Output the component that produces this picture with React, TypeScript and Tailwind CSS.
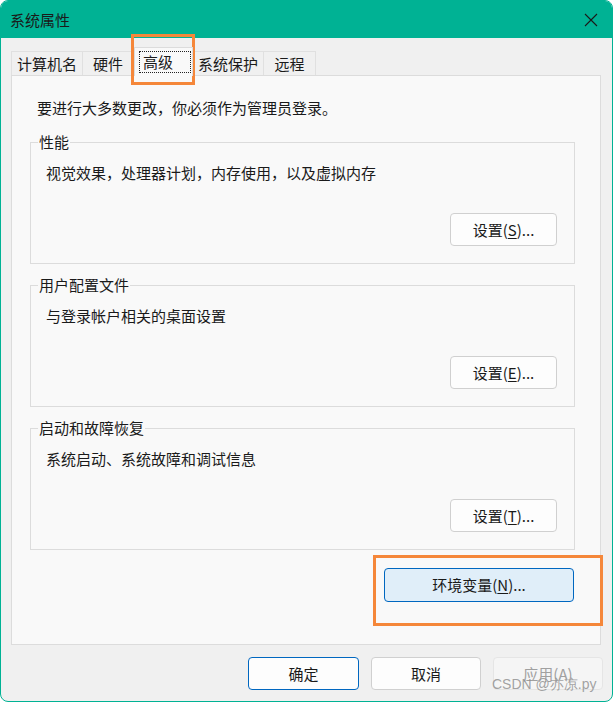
import React from "react";

function Btn({
  children,
  className = "",
}: {
  children: React.ReactNode;
  className?: string;
}) {
  return (
    <div
      className={
        "flex items-center justify-center rounded-[4px] border text-[15px] leading-[20px] " +
        className
      }
    >
      {children}
    </div>
  );
}

function Group({
  label,
  desc,
  btn,
  keyChar,
}: {
  label: string;
  desc: string;
  btn: string;
  keyChar: string;
}) {
  return (
    <div className="relative ml-[18px] flex h-[122px] w-[545px] flex-col border border-[#dcdcdc]">
      <div className="absolute -top-[11px] left-[7px] bg-[#f9f9f9] px-[1px] text-[15px] leading-[20px] text-[#1a1a1a]">
        {label}
      </div>
      <div className="pl-[15px] pt-[20px] text-[15px] leading-[20px] text-[#1a1a1a]">
        {desc}
      </div>
      <Btn className="mr-[17px] mt-[30px] h-[33px] w-[107px] self-end border-[#d0d0d0] bg-[#fdfdfd] text-[#1a1a1a]">
        <span>
          {btn}(<span className="underline underline-offset-2">{keyChar}</span>)...
        </span>
      </Btn>
    </div>
  );
}

export default function App() {
  const tabBase =
    "flex h-[24px] items-center justify-center border border-b-0 border-[#e0e0e0] bg-[#f0f0f0] text-[15px] leading-[20px] text-[#1a1a1a]";
  return (
    <div className="relative h-[702px] w-[613px] overflow-hidden rounded-[8px] border border-[#00b294] bg-[#f0f0f0] font-['Microsoft_YaHei_UI','Noto_Sans_CJK_SC',sans-serif]">
      {/* Title bar */}
      <div className="flex h-[37px] items-center justify-between bg-[#00b294] pl-[9px] pr-[14px]">
        <span className="text-[15px] leading-[20px] text-[#1a1a1a]">系统属性</span>
        <svg width="14" height="14" viewBox="0 0 14 14" className="text-[#1a1a1a]">
          <path d="M1 1 L13 13 M13 1 L1 13" stroke="currentColor" strokeWidth="1.1" />
        </svg>
      </div>

      {/* Tabs */}
      <div className="ml-[10px] mt-[9px] flex h-[28px] items-end">
        <div className={tabBase + " w-[72px]"}>计算机名</div>
        <div className={tabBase + " w-[51px] border-l-0"}>硬件</div>
        <div className="relative z-10 -mb-[1px] flex h-[29px] w-[59px] items-start justify-center border border-b-0 border-[#dcdcdc] bg-[#f9f9f9] pt-[3px]">
          <div className="ml-[4px] mr-[1px] flex h-[22px] w-full items-center justify-start border border-dotted border-[#222] pl-[3px] text-[15px] leading-[20px] text-[#1a1a1a]">
            高级
          </div>
        </div>
        <div className={tabBase + " w-[71px] border-l-0"}>系统保护</div>
        <div className={tabBase + " w-[52px] border-l-0"}>远程</div>
      </div>

      {/* Panel */}
      <div className="ml-[10px] flex h-[570px] w-[590px] flex-col border border-[#dcdcdc] bg-[#f9f9f9]">
        <div className="pl-[25px] pt-[22px] text-[15px] leading-[20px] text-[#1a1a1a]">
          要进行大多数更改，你必须作为管理员登录。
        </div>
        <div className="mt-[24px] flex flex-col gap-[21px]">
          <Group label="性能" desc="视觉效果，处理器计划，内存使用，以及虚拟内存" btn="设置" keyChar="S" />
          <Group label="用户配置文件" desc="与登录帐户相关的桌面设置" btn="设置" keyChar="E" />
          <Group label="启动和故障恢复" desc="系统启动、系统故障和调试信息" btn="设置" keyChar="T" />
        </div>
        <Btn className="mr-[26px] mt-[18px] h-[34px] w-[190px] self-end border-[#0067c0] bg-[#e0eef9] text-[#1a1a1a]">
          <span>
            环境变量(<span className="underline underline-offset-2">N</span>)...
          </span>
        </Btn>
      </div>

      {/* Bottom buttons */}
      <div className="mr-[9px] mt-[12px] flex justify-end gap-[12px]">
        <Btn className="h-[33px] w-[111px] border-[#0067c0] bg-[#fdfdfd] text-[#1a1a1a]">确定</Btn>
        <Btn className="h-[33px] w-[110px] border-[#d0d0d0] bg-[#fdfdfd] text-[#1a1a1a]">取消</Btn>
        <Btn className="h-[33px] w-[110px] border-[#e5e5e5] bg-[#f5f5f5] text-[#a0a0a0]">应用(A)</Btn>
      </div>

      {/* Watermark */}
      <div className="pointer-events-none absolute left-[491px] top-[674px] font-['Liberation_Sans',sans-serif] text-[14px] leading-[18px] text-[#8c8c8c]/80">
        CSDN @亦凉.py
      </div>

      {/* Orange annotation boxes */}
      <div className="pointer-events-none absolute left-[130px] top-[33px] h-[51px] w-[64px] border-[3px] border-[#f5873a]" />
      <div className="pointer-events-none absolute left-[372px] top-[554px] h-[71px] w-[230px] border-[3px] border-[#f5873a]" />
    </div>
  );
}
